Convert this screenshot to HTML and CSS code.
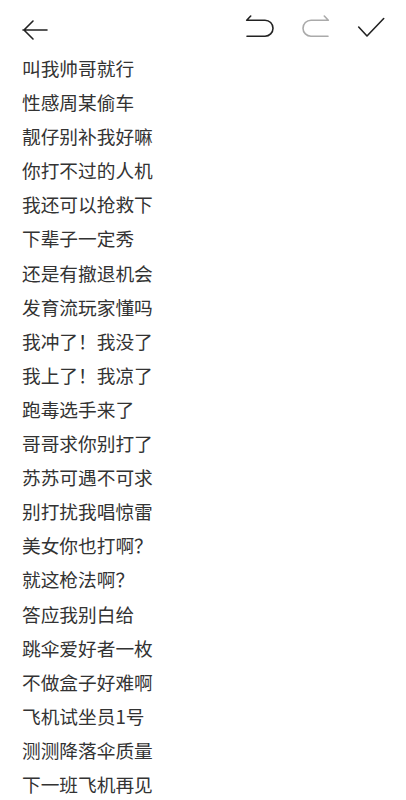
FILE: index.html
```html
<!DOCTYPE html>
<html lang="zh">
<head>
<meta charset="utf-8">
<link rel="stylesheet" href="styles.css">
</head>
<body>
<div class="header">
  <svg class="icon back" width="30" height="30" viewBox="0 0 30 30"><path d="M3 15H27M13 6L4 15L13 24" fill="none" stroke="#222" stroke-width="1.6" stroke-linecap="round" stroke-linejoin="round"/></svg>
  <div class="actions">
    <svg class="icon" width="40" height="30" viewBox="0 0 40 30"><path d="M10.7 1L6.7 5.2H25A8 8 0 0 1 25 21.2H7" fill="none" stroke="#222" stroke-width="1.6" stroke-linecap="round" stroke-linejoin="round"/></svg>
    <svg class="icon" width="40" height="30" viewBox="0 0 40 30"><path d="M28.3 1L32.3 5.2H15A8 8 0 0 0 15 21.2H32" fill="none" stroke="#aaa" stroke-width="1.6" stroke-linecap="round" stroke-linejoin="round"/></svg>
    <svg class="icon" width="40" height="30" viewBox="0 0 40 30"><path d="M6.7 12L15 21L31.7 3.5" fill="none" stroke="#222" stroke-width="1.6" stroke-linecap="round" stroke-linejoin="round"/></svg>
  </div>
</div>
<div class="list">
  <div class="row">叫我帅哥就行</div>
  <div class="row">性感周某偷车</div>
  <div class="row">靓仔别补我好嘛</div>
  <div class="row">你打不过的人机</div>
  <div class="row">我还可以抢救下</div>
  <div class="row">下辈子一定秀</div>
  <div class="row">还是有撤退机会</div>
  <div class="row">发育流玩家懂吗</div>
  <div class="row">我冲了！我没了</div>
  <div class="row">我上了！我凉了</div>
  <div class="row">跑毒选手来了</div>
  <div class="row">哥哥求你别打了</div>
  <div class="row">苏苏可遇不可求</div>
  <div class="row">别打扰我唱惊雷</div>
  <div class="row">美女你也打啊？</div>
  <div class="row">就这枪法啊？</div>
  <div class="row">答应我别白给</div>
  <div class="row">跳伞爱好者一枚</div>
  <div class="row">不做盒子好难啊</div>
  <div class="row">飞机试坐员1号</div>
  <div class="row">测测降落伞质量</div>
  <div class="row">下一班飞机再见</div>
</div>
</body>
</html>
```
FILE: styles.css
```css
html, body {
  margin: 0;
  padding: 0;
  background: #fff;
}
body {
  width: 406px;
  height: 800px;
  overflow: hidden;
  font-family: "Noto Sans CJK SC", "Noto Sans", sans-serif;
}
.header {
  display: flex;
  align-items: flex-start;
  height: 50px;
  padding: 15px 14px 0 20px;
  box-sizing: border-box;
}
.icon {
  display: block;
  flex: none;
}
.actions {
  margin-left: auto;
  display: flex;
  gap: 16px;
}
.list {
  padding-left: 22px;
  padding-top: 1px;
}
.row {
  font-size: 18.7px;
  line-height: 34.1px;
  color: #333;
  white-space: nowrap;
}
```
